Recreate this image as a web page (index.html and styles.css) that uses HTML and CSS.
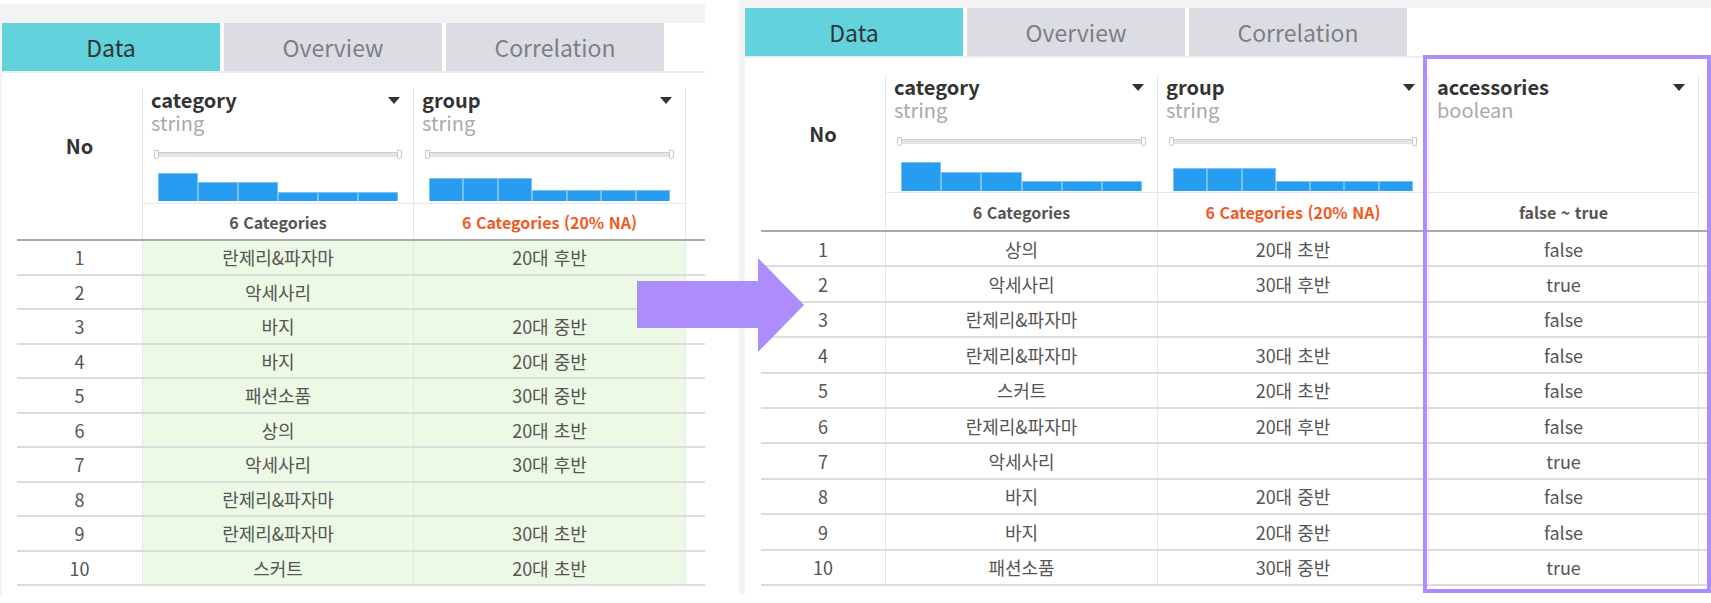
FILE: index.html
```html
<!DOCTYPE html>
<html lang="ko">
<head>
<meta charset="utf-8">
<title>Data table</title>
<link rel="stylesheet" href="styles.css">
</head>
<body>
<div class="page">
  <section class="panel panel-left">
    <div class="sheet">
      <div class="tabs">
        <div class="tab active">Data</div>
        <div class="tab">Overview</div>
        <div class="tab">Correlation</div>
      </div>
      <div class="table">
        <div class="thead">
          <div class="h-no">No</div>
          <div class="h-col">
            <div class="col-top">
              <div class="col-name"><span>category</span><span class="caret"></span></div>
              <div class="col-type">string</div>
              <div class="slider"><span class="handle l"></span><span class="handle r"></span></div>
              <div class="hist"><i style="height:28px"></i><i style="height:18.7px"></i><i style="height:18.7px"></i><i style="height:9.3px"></i><i style="height:9.3px"></i><i style="height:9.3px"></i></div>
            </div>
            <div class="col-sum">6 Categories</div>
          </div>
          <div class="h-col last">
            <div class="col-top">
              <div class="col-name"><span>group</span><span class="caret"></span></div>
              <div class="col-type">string</div>
              <div class="slider"><span class="handle l"></span><span class="handle r"></span></div>
              <div class="hist"><i style="height:23px"></i><i style="height:23px"></i><i style="height:23px"></i><i style="height:11.5px"></i><i style="height:11.5px"></i><i style="height:11.5px"></i><i style="height:11.5px"></i></div>
            </div>
            <div class="col-sum na">6 Categories (20% NA)</div>
          </div>
          <div></div>
        </div>
        <div class="row"><div class="cell">1</div><div class="cell d">란제리&amp;파자마</div><div class="cell d last">20대 후반</div><div></div></div>
        <div class="row"><div class="cell">2</div><div class="cell d">악세사리</div><div class="cell d last"></div><div></div></div>
        <div class="row"><div class="cell">3</div><div class="cell d">바지</div><div class="cell d last">20대 중반</div><div></div></div>
        <div class="row"><div class="cell">4</div><div class="cell d">바지</div><div class="cell d last">20대 중반</div><div></div></div>
        <div class="row"><div class="cell">5</div><div class="cell d">패션소품</div><div class="cell d last">30대 중반</div><div></div></div>
        <div class="row"><div class="cell">6</div><div class="cell d">상의</div><div class="cell d last">20대 초반</div><div></div></div>
        <div class="row"><div class="cell">7</div><div class="cell d">악세사리</div><div class="cell d last">30대 후반</div><div></div></div>
        <div class="row"><div class="cell">8</div><div class="cell d">란제리&amp;파자마</div><div class="cell d last"></div><div></div></div>
        <div class="row"><div class="cell">9</div><div class="cell d">란제리&amp;파자마</div><div class="cell d last">30대 초반</div><div></div></div>
        <div class="row"><div class="cell">10</div><div class="cell d">스커트</div><div class="cell d last">20대 초반</div><div></div></div>
      </div>
    </div>
  </section>

  <section class="panel panel-right">
    <div class="sheet">
      <div class="tabs">
        <div class="tab active">Data</div>
        <div class="tab">Overview</div>
        <div class="tab">Correlation</div>
      </div>
      <div class="table">
        <div class="thead">
          <div class="h-no">No</div>
          <div class="h-col">
            <div class="col-top">
              <div class="col-name"><span>category</span><span class="caret"></span></div>
              <div class="col-type">string</div>
              <div class="slider"><span class="handle l"></span><span class="handle r"></span></div>
              <div class="hist"><i style="height:29px"></i><i style="height:19.5px"></i><i style="height:19.5px"></i><i style="height:10px"></i><i style="height:10px"></i><i style="height:10px"></i></div>
            </div>
            <div class="col-sum">6 Categories</div>
          </div>
          <div class="h-col">
            <div class="col-top">
              <div class="col-name"><span>group</span><span class="caret"></span></div>
              <div class="col-type">string</div>
              <div class="slider"><span class="handle l"></span><span class="handle r"></span></div>
              <div class="hist"><i style="height:23px"></i><i style="height:23px"></i><i style="height:23px"></i><i style="height:10.5px"></i><i style="height:10.5px"></i><i style="height:10.5px"></i><i style="height:10.5px"></i></div>
            </div>
            <div class="col-sum na">6 Categories (20% NA)</div>
          </div>
          <div class="h-col last">
            <div class="col-top">
              <div class="col-name"><span>accessories</span><span class="caret"></span></div>
              <div class="col-type">boolean</div>
            </div>
            <div class="col-sum">false ~ true</div>
          </div>
          <div></div>
        </div>
        <div class="row"><div class="cell">1</div><div class="cell d">상의</div><div class="cell d">20대 초반</div><div class="cell d last">false</div><div></div></div>
        <div class="row"><div class="cell">2</div><div class="cell d">악세사리</div><div class="cell d">30대 후반</div><div class="cell d last">true</div><div></div></div>
        <div class="row"><div class="cell">3</div><div class="cell d">란제리&amp;파자마</div><div class="cell d"></div><div class="cell d last">false</div><div></div></div>
        <div class="row"><div class="cell">4</div><div class="cell d">란제리&amp;파자마</div><div class="cell d">30대 초반</div><div class="cell d last">false</div><div></div></div>
        <div class="row"><div class="cell">5</div><div class="cell d">스커트</div><div class="cell d">20대 초반</div><div class="cell d last">false</div><div></div></div>
        <div class="row"><div class="cell">6</div><div class="cell d">란제리&amp;파자마</div><div class="cell d">20대 후반</div><div class="cell d last">false</div><div></div></div>
        <div class="row"><div class="cell">7</div><div class="cell d">악세사리</div><div class="cell d"></div><div class="cell d last">true</div><div></div></div>
        <div class="row"><div class="cell">8</div><div class="cell d">바지</div><div class="cell d">20대 중반</div><div class="cell d last">false</div><div></div></div>
        <div class="row"><div class="cell">9</div><div class="cell d">바지</div><div class="cell d">20대 중반</div><div class="cell d last">false</div><div></div></div>
        <div class="row"><div class="cell">10</div><div class="cell d">패션소품</div><div class="cell d">30대 중반</div><div class="cell d last">true</div><div></div></div>
      </div>
    </div>
  </section>

  <div class="highlight"></div>
  <svg class="arrow" width="167" height="94" viewBox="0 0 167 94" aria-hidden="true">
    <polygon points="0,23 121,23 121,0 167,47 121,94 121,70 0,70" fill="#ad8cfb"/>
  </svg>
</div>
</body>
</html>
```

FILE: styles.css
```css
* { box-sizing: border-box; }
html, body { margin: 0; padding: 0; }
body {
  width: 1711px;
  height: 603px;
  overflow: hidden;
  background: #fff;
  font-family: "Noto Sans CJK KR", "Noto Sans", sans-serif;
  color: #555;
}
.page {
  position: relative;
  display: flex;
  align-items: flex-start;
  gap: 34px;
  height: 603px;
}
.panel {
  background: #f3f3f3;
  display: flex;
  flex-direction: column;
}
.panel-left {
  width: 705px;
  height: 593px;
  margin-top: 4px;
  padding: 19px 0 0 2px;
  --cols: 125px 271px 273px 19px;
  --row-h: 34.5px;
  --top-h: 116px;
  --sum-h: 35px;
  --table-gap: 15px;
  --table-indent: 15px;
  --hist-pad: 2px;
  --name-pad: 0px;
}
.panel-right {
  flex: 1;
  height: 594px;
  padding: 8px 0 0 6px;
  --cols: 124px 272px 271px 271px 12px;
  --row-h: 35.4px;
  --top-h: 119px;
  --sum-h: 37px;
  --table-gap: 16px;
  --table-indent: 16px;
  --hist-pad: 1px;
  --name-pad: 1px;
}
.sheet {
  flex: 1;
  background: #fff;
}
.tabs {
  display: flex;
  gap: 4px;
  border-bottom: 2px solid #ececec;
}
.tab {
  width: 218px;
  height: 48px;
  display: flex;
  align-items: center;
  justify-content: center;
  font-size: 23px;
  line-height: 1;
  background: #dcdde2;
  color: #7e7d8b;
}
.tab.active {
  background: #62d3dc;
  color: #2f3436;
}
.table {
  margin: var(--table-gap) 0 0 var(--table-indent);
}
.thead, .row {
  display: grid;
  grid-template-columns: var(--cols);
}
.thead {
  border-bottom: 2px solid #a9a9a9;
}
.h-no {
  height: var(--top-h);
  display: flex;
  align-items: center;
  justify-content: center;
  font-size: 20px;
  line-height: 1;
  font-weight: 700;
  color: #333;
}
.h-col {
  border-left: 1px solid #e6e6e6;
}
.h-col.last {
  border-right: 1px solid #e6e6e6;
}
.col-top {
  height: var(--top-h);
  display: flex;
  flex-direction: column;
  padding-top: var(--name-pad);
  border-bottom: 1px solid #e8e8e8;
}
.col-name {
  height: 24px;
  line-height: 24px;
  display: flex;
  align-items: center;
  justify-content: space-between;
  padding: 0 13px 0 8px;
  font-size: 20px;
  font-weight: 700;
  color: #333;
}
.caret {
  width: 0;
  height: 0;
  border-left: 6px solid transparent;
  border-right: 6px solid transparent;
  border-top: 7px solid #333;
}
.col-type {
  height: 22px;
  line-height: 22px;
  padding-left: 8px;
  font-size: 20px;
  color: #a9a9a9;
}
.slider {
  position: relative;
  height: 9px;
  margin: 16px 11px 0 11px;
}
.slider::before {
  content: "";
  position: absolute;
  left: 0;
  right: 0;
  top: 2px;
  height: 5px;
  background: #e4e4e4;
  border-radius: 3px;
  box-shadow: inset 0 1px 1px rgba(0, 0, 0, 0.1);
}
.handle {
  position: absolute;
  top: 0;
  width: 5px;
  height: 9px;
  background: #fff;
  border: 1px solid #c8c8c8;
  border-radius: 0 0 2px 2px;
}
.handle.l { left: 0; }
.handle.r { right: 0; }
.hist {
  margin-top: auto;
  display: flex;
  align-items: flex-end;
  padding: 0 15px var(--hist-pad) 15px;
}
.hist i {
  flex: 1;
  background: #279df1;
  border: 1px solid #78c1f6;
  border-bottom: 0;
}
.col-sum {
  height: var(--sum-h);
  display: flex;
  align-items: center;
  justify-content: center;
  font-size: 16px;
  line-height: 1;
  font-weight: 700;
  color: #555;
}
.col-sum.na {
  color: #f15a22;
}
.row {
  height: var(--row-h);
  border-bottom: 2px solid #dcdcdc;
}
.cell {
  display: flex;
  align-items: center;
  justify-content: center;
  font-size: 18px;
  line-height: 1;
  color: #555;
}
.cell.d {
  border-left: 1px solid #e7e7e7;
}
.cell.d.last {
  border-right: 1px solid #e7e7e7;
}
.panel-left .cell.d {
  background: #ecf9e4;
}
.highlight {
  position: absolute;
  left: 1423px;
  top: 55px;
  width: 288px;
  height: 538px;
  border: 4px solid #ad8cfb;
}
.arrow {
  position: absolute;
  left: 637px;
  top: 258px;
}
```
